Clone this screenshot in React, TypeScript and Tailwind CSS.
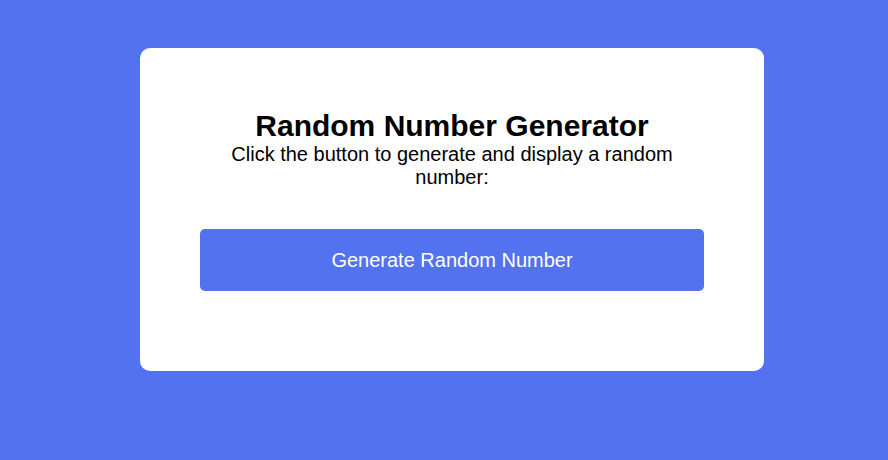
export default function App() {
  return (
    <div className="min-h-[460px] w-full bg-[#5372ef] pt-[48px] font-['Liberation_Sans',Arial,sans-serif]">
      <div className="ml-[140px] flex h-[323px] w-[624px] flex-col items-center rounded-[10px] bg-white px-[60px] pt-[61px]">
        <h1 className="text-[30px] font-bold leading-[34px] text-black">Random Number Generator</h1>
        <p className="text-center text-[20px] leading-[23px] text-black">
          Click the button to generate and display a random number:
        </p>
        <button className="mt-[40px] h-[62px] w-full rounded-[5px] bg-[#5372ef] text-[20px] text-white">
          Generate Random Number
        </button>
      </div>
    </div>
  );
}
